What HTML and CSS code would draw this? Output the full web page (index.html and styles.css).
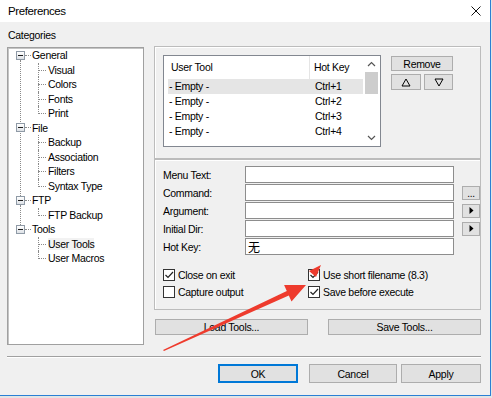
FILE: index.html
```html
<!DOCTYPE html>
<html lang="en">
<head>
    <meta charset="UTF-8">
    <title>Preferences</title>
    <link rel="stylesheet" href="styles.css">
</head>
<body>
    <div class="window">
        <div class="titlebar">
            <span class="title">Preferences</span>
            <svg class="close" width="10" height="10" viewBox="0 0 10 10">
                <path d="M0.5 0.5 L9.5 9.5 M9.5 0.5 L0.5 9.5" stroke="#111" stroke-width="1" fill="none"/>
            </svg>
        </div>

        <div class="main">
            <div class="columns">
                <div class="left">
                    <div class="caption">Categories</div>
                    <ul class="tree">
                        <li class="root">
                            <div class="node"><span class="toggle"></span><span class="stub"></span><span class="label">General</span></div>
                            <ul class="children">
                                <li><span class="label">Visual</span></li>
                                <li><span class="label">Colors</span></li>
                                <li><span class="label">Fonts</span></li>
                                <li><span class="label">Print</span></li>
                            </ul>
                        </li>
                        <li class="root">
                            <div class="node"><span class="toggle"></span><span class="stub"></span><span class="label">File</span></div>
                            <ul class="children">
                                <li><span class="label">Backup</span></li>
                                <li><span class="label">Association</span></li>
                                <li><span class="label">Filters</span></li>
                                <li><span class="label">Syntax Type</span></li>
                            </ul>
                        </li>
                        <li class="root">
                            <div class="node"><span class="toggle"></span><span class="stub"></span><span class="label">FTP</span></div>
                            <ul class="children">
                                <li><span class="label">FTP Backup</span></li>
                            </ul>
                        </li>
                        <li class="root">
                            <div class="node"><span class="toggle"></span><span class="stub"></span><span class="label">Tools</span></div>
                            <ul class="children">
                                <li><span class="label selected">User Tools</span></li>
                                <li><span class="label">User Macros</span></li>
                            </ul>
                        </li>
                    </ul>
                </div>

                <div class="right">
                    <div class="frame frame-top">
                        <div class="listview">
                            <div class="lv-body">
                                <div class="lv-header">
                                    <span class="lv-col1">User Tool</span>
                                    <span class="lv-col2">Hot Key</span>
                                </div>
                                <div class="lv-row active"><span>- Empty -</span><span>Ctrl+1</span></div>
                                <div class="lv-row"><span>- Empty -</span><span>Ctrl+2</span></div>
                                <div class="lv-row"><span>- Empty -</span><span>Ctrl+3</span></div>
                                <div class="lv-row"><span>- Empty -</span><span>Ctrl+4</span></div>
                            </div>
                            <div class="scrollbar">
                                <div class="sb-btn">
                                    <svg width="9" height="6" viewBox="0 0 9 6"><path d="M1 5 L4.5 1.5 L8 5" stroke="#555" stroke-width="1.2" fill="none"/></svg>
                                </div>
                                <div class="sb-track"><div class="sb-thumb"></div></div>
                                <div class="sb-btn">
                                    <svg width="9" height="6" viewBox="0 0 9 6"><path d="M1 1 L4.5 4.5 L8 1" stroke="#555" stroke-width="1.2" fill="none"/></svg>
                                </div>
                            </div>
                        </div>
                        <div class="list-buttons">
                            <button class="btn remove">Remove</button>
                            <div class="move-row">
                                <button class="btn move">
                                    <svg width="10" height="9" viewBox="0 0 10 9"><path d="M5 1 L9 8 L1 8 Z" stroke="#000" stroke-width="1" fill="none"/></svg>
                                </button>
                                <button class="btn move">
                                    <svg width="10" height="9" viewBox="0 0 10 9"><path d="M1 1 L9 1 L5 8 Z" stroke="#000" stroke-width="1" fill="none"/></svg>
                                </button>
                            </div>
                        </div>
                    </div>

                    <div class="frame frame-bottom">
                        <div class="fields">
                            <label>Menu Text:</label>
                            <div class="input"></div>
                            <span></span>

                            <label>Command:</label>
                            <div class="input"></div>
                            <button class="btn mini dots">...</button>

                            <label>Argument:</label>
                            <div class="input"></div>
                            <button class="btn mini">
                                <svg width="5" height="7" viewBox="0 0 5 7"><path d="M0.5 0 L4.5 3.5 L0.5 7 Z" fill="#000"/></svg>
                            </button>

                            <label>Initial Dir:</label>
                            <div class="input"></div>
                            <button class="btn mini">
                                <svg width="5" height="7" viewBox="0 0 5 7"><path d="M0.5 0 L4.5 3.5 L0.5 7 Z" fill="#000"/></svg>
                            </button>

                            <label>Hot Key:</label>
                            <div class="input cjk">无</div>
                            <span></span>
                        </div>

                        <div class="checks">
                            <div class="check"><span class="box on"></span>Close on exit</div>
                            <div class="check"><span class="box on"></span>Use short filename (8.3)</div>
                            <div class="check"><span class="box"></span>Capture output</div>
                            <div class="check"><span class="box on"></span>Save before execute</div>
                        </div>
                    </div>

                    <div class="tool-buttons">
                        <button class="btn wide">Load Tools...</button>
                        <button class="btn wide">Save Tools...</button>
                    </div>
                </div>
            </div>

            <div class="separator"></div>

            <div class="dialog-buttons">
                <button class="btn dlg default">OK</button>
                <button class="btn dlg cancel">Cancel</button>
                <button class="btn dlg">Apply</button>
            </div>
        </div>

        <!-- red arrows drawn over the screenshot -->
        <svg class="annotation" width="490" height="395" viewBox="0 0 490 395">
            <polygon points="163,350 286.8,291 284.1,285.1 306,285 291.5,301.5 288.8,295.6 164,351" fill="#ee3b2d"/>
            <polygon points="321,265 309,271 316,277" fill="#ee3b2d"/>
        </svg>
    </div>
</body>
</html>
```

FILE: styles.css
```css
body {
    margin: 0;
    background-color: #e4e4e4;
    font-family: "Liberation Sans", Arial, sans-serif;
    font-size: 10.5px;
    letter-spacing: -0.3px;
    color: #000;
}

.window {
    position: relative;
    width: 490px;
    height: 395px;
    background-color: #f0f0f0;
    border-right: 1px solid #2a7fd4;
    border-bottom: 1px solid #2a7fd4;
}

.titlebar {
    display: flex;
    align-items: center;
    height: 22px;
    padding-left: 8px;
    background-color: #fff;
}

.title {
    font-size: 11.5px;
    letter-spacing: -0.4px;
}

.close {
    margin-left: auto;
    margin-right: 9px;
}

.main {
    padding: 8px 9px 0 7px;
}

.columns {
    display: flex;
    gap: 10px;
}

/* categories tree */

.left {
    width: 137px;
}

.caption {
    height: 17px;
    line-height: 11px;
    padding-left: 1px;
}

.tree {
    box-sizing: border-box;
    height: 298px;
    margin: 0;
    padding: 0;
    list-style: none;
    background-color: #fff;
    border: 1px solid #a0a0a0;
    box-shadow: inset 1px 1px 0 #c4c4c4;
}

.children {
    margin: 0;
    padding: 0;
    list-style: none;
}

.root {
    position: relative;
}

.root:not(:last-child)::after {
    content: '';
    position: absolute;
    left: 12px;
    top: 12px;
    bottom: -3px;
    border-left: 1px dotted #8a8a8a;
}

.node {
    display: flex;
    align-items: center;
    height: 14.5px;
}

.toggle {
    position: relative;
    box-sizing: border-box;
    width: 9px;
    height: 9px;
    margin-left: 8px;
    border: 1px solid #8f9aa6;
    background: linear-gradient(#fff, #dde1e6);
}

.toggle::after {
    content: '';
    position: absolute;
    left: 1px;
    top: 3px;
    width: 5px;
    height: 1px;
    background-color: #1c1c1c;
}

.stub {
    width: 6px;
    margin-right: 1px;
    border-top: 1px dotted #8a8a8a;
}

.label {
    line-height: 14.5px;
}

.children li {
    position: relative;
    height: 14.5px;
    line-height: 14.5px;
    padding-left: 40px;
}

.children li::before {
    content: '';
    position: absolute;
    left: 30px;
    top: 7px;
    width: 8px;
    border-top: 1px dotted #8a8a8a;
}

.children li::after {
    content: '';
    position: absolute;
    left: 30px;
    top: 0;
    bottom: 0;
    border-left: 1px dotted #8a8a8a;
}

.children li:last-child::after {
    bottom: auto;
    height: 8px;
}

.selected {
    background-color: #f2f2f2;
}

/* right side */

.right {
    width: 327px;
    padding-top: 16px;
}

.frame {
    box-sizing: border-box;
    border: 1px solid #bcbcbc;
    box-shadow: inset 1px 1px 0 #fff;
}

.frame-top {
    display: flex;
    gap: 10px;
    height: 113px;
    padding: 8px 0 0 8px;
}

.listview {
    display: flex;
    box-sizing: border-box;
    width: 218px;
    height: 92px;
    background-color: #fff;
    border: 1px solid #828790;
}

.lv-body {
    flex: 1;
}

.lv-header {
    display: flex;
    height: 23px;
    line-height: 23px;
}

.lv-col1 {
    width: 138px;
    padding-left: 7px;
    border-right: 1px solid #e5e5e5;
}

.lv-col2 {
    padding-left: 4px;
}

.lv-row {
    display: grid;
    grid-template-columns: 146px 1fr;
    height: 15px;
    line-height: 15px;
    margin-left: 4px;
    padding-left: 1px;
}

.lv-row.active {
    background-color: #e5e5e5;
}

.scrollbar {
    display: flex;
    flex-direction: column;
    width: 17px;
}

.sb-btn {
    display: flex;
    align-items: center;
    justify-content: center;
    height: 16px;
}

.sb-track {
    flex: 1;
}

.sb-thumb {
    height: 22px;
    margin: 0 2px;
    background-color: #cdcdcd;
}

.btn {
    box-sizing: border-box;
    padding: 0;
    font: inherit;
    letter-spacing: inherit;
    color: #000;
    background-color: #e1e1e1;
    border: 1px solid #adadad;
}

.list-buttons {
    display: flex;
    flex-direction: column;
    gap: 3px;
    margin-top: 1px;
}

.remove {
    width: 62px;
    height: 15px;
    line-height: 12px;
}

.move-row {
    display: flex;
    gap: 3px;
}

.move {
    display: flex;
    align-items: center;
    justify-content: center;
    width: 30px;
    height: 16px;
}

.move + .move {
    width: 29px;
}

.frame-bottom {
    height: 151px;
    padding: 6px 0 0 8px;
}

.fields {
    display: grid;
    grid-template-columns: 82px 209px 18px;
    grid-auto-rows: 17px;
    column-gap: 4px;
    row-gap: 1px;
    align-items: center;
}

.fields label {
    margin-right: -4px;
}

.input {
    box-sizing: border-box;
    height: 17px;
    margin-left: -4px;
    margin-right: 4px;
    padding-left: 2px;
    background-color: #fff;
    border: 1px solid #8d8d8d;
}

.cjk {
    font-family: "Noto Sans CJK SC", sans-serif;
    font-size: 12px;
    line-height: 15px;
}

.mini {
    display: flex;
    align-items: center;
    justify-content: center;
    width: 18px;
    height: 14px;
}

.dots {
    align-items: flex-end;
    line-height: 10px;
    font-size: 10px;
}

.checks {
    display: grid;
    grid-template-columns: 145px 1fr;
    grid-auto-rows: 17px;
    margin-top: 11px;
}

.check {
    display: flex;
    align-items: center;
    gap: 3px;
}

.box {
    box-sizing: border-box;
    width: 12px;
    height: 12px;
    background-color: #fff;
    border: 1px solid #333;
}

.box.on {
    background: #fff url("data:image/svg+xml,%3Csvg xmlns='http://www.w3.org/2000/svg' width='10' height='10'%3E%3Cpath d='M1.5 5 L4 7.5 L9 2' stroke='%23222' stroke-width='1.2' fill='none'/%3E%3C/svg%3E") center no-repeat;
}

.tool-buttons {
    display: flex;
    justify-content: space-between;
    margin-top: 9px;
    padding-left: 1px;
}

.wide {
    width: 153px;
    height: 16px;
    line-height: 13px;
}

.separator {
    margin-top: 11px;
    border-top: 1px solid #a0a0a0;
    border-bottom: 1px solid #fff;
}

.dialog-buttons {
    display: flex;
    justify-content: flex-end;
    margin-top: 6px;
}

.dlg {
    width: 80px;
    height: 19px;
}

.default {
    border-color: #0078d7;
    box-shadow: inset 0 0 0 1px #0078d7;
}

.cancel {
    width: 88px;
    margin-left: 11px;
    margin-right: 4px;
}

.annotation {
    position: absolute;
    left: 0;
    top: 0;
    pointer-events: none;
}
```
